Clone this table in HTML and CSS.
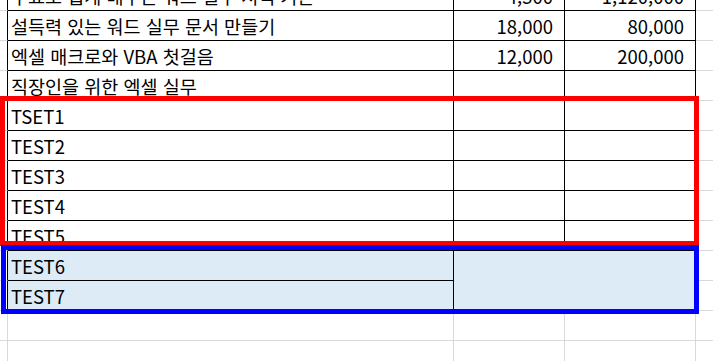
FILE: index.html
```html
<!DOCTYPE html>
<html lang="ko">
<head>
<meta charset="utf-8">
<title>Sheet</title>
<link rel="stylesheet" href="styles.css">
</head>
<body>
<div class="sheet">
  <div class="grid">
    <div class="c s sk"></div>
    <div class="c k">무료로 쉽게 배우는 워드 실무 서식 기본</div>
    <div class="c k n">4,500</div>
    <div class="c k n">1,120,000</div>
    <div class="c d"></div>

    <div class="c s sk"></div>
    <div class="c k">설득력 있는 워드 실무 문서 만들기</div>
    <div class="c k n">18,000</div>
    <div class="c k n">80,000</div>
    <div class="c d"></div>

    <div class="c s sk"></div>
    <div class="c k">엑셀 매크로와 VBA 첫걸음</div>
    <div class="c k n">12,000</div>
    <div class="c k n">200,000</div>
    <div class="c d"></div>

    <div class="c s sk"></div>
    <div class="c k">직장인을 위한 엑셀 실무</div>
    <div class="c k n"></div>
    <div class="c k n"></div>
    <div class="c d"></div>

    <div class="c s sk"></div>
    <div class="c k">TSET1</div>
    <div class="c k"></div>
    <div class="c k"></div>
    <div class="c d"></div>

    <div class="c s sk"></div>
    <div class="c k">TEST2</div>
    <div class="c k"></div>
    <div class="c k"></div>
    <div class="c d"></div>

    <div class="c s sk"></div>
    <div class="c k">TEST3</div>
    <div class="c k"></div>
    <div class="c k"></div>
    <div class="c d"></div>

    <div class="c s sk"></div>
    <div class="c k">TEST4</div>
    <div class="c k"></div>
    <div class="c k"></div>
    <div class="c d"></div>

    <div class="c s sk"></div>
    <div class="c k">TEST5</div>
    <div class="c k"></div>
    <div class="c k"></div>
    <div class="c d"></div>

    <div class="c s sk"></div>
    <div class="c k fill">TEST6</div>
    <div class="c k fill merge"></div>
    <div class="c d"></div>

    <div class="c s sk"></div>
    <div class="c k fill">TEST7</div>
    <div class="c d"></div>

    <div class="c s"></div>
    <div class="c"></div>
    <div class="c"></div>
    <div class="c"></div>
    <div class="c d"></div>

    <div class="c s"></div>
    <div class="c"></div>
    <div class="c"></div>
    <div class="c"></div>
    <div class="c d"></div>
  </div>
  <div class="box box-red"></div>
  <div class="box box-blue"></div>
</div>
</body>
</html>
```

FILE: styles.css
```css
html, body {
  margin: 0;
  padding: 0;
  background: #ffffff;
  overflow: hidden;
}

body {
  font-family: "Noto Sans CJK KR", "Noto Sans", sans-serif;
  font-size: 18.5px;
  color: #000000;
}

.sheet {
  position: relative;
  width: 713px;
  height: 361px;
  overflow: hidden;
}

.grid {
  display: grid;
  grid-template-columns: 8px 446px 111px 131px 100px;
  grid-auto-rows: 30px;
  margin-top: -19px;
}

.c {
  box-sizing: border-box;
  border-right: 1px solid #d9d9d9;
  border-bottom: 1px solid #d9d9d9;
  display: flex;
  align-items: flex-end;
  padding: 0 0 1px 3px;
  white-space: nowrap;
  overflow: hidden;
  line-height: normal;
}

.s {
  padding: 0;
}

.sk {
  border-right-color: #000000;
}

.k {
  border-right-color: #000000;
  border-bottom-color: #000000;
}

.d {
  border-right: none;
}

.n {
  justify-content: flex-end;
  padding-right: 11px;
}

.fill {
  background: #ddebf7;
}

.merge {
  grid-column: span 2;
  grid-row: span 2;
}

.box {
  position: absolute;
  box-sizing: border-box;
  border-style: solid;
  border-width: 5px;
}

.box-red {
  left: 0;
  top: 96px;
  width: 699px;
  height: 150px;
  border-color: #ff0000;
}

.box-blue {
  left: 1px;
  top: 245px;
  width: 698px;
  height: 69px;
  border-color: #0000ff;
}
```
